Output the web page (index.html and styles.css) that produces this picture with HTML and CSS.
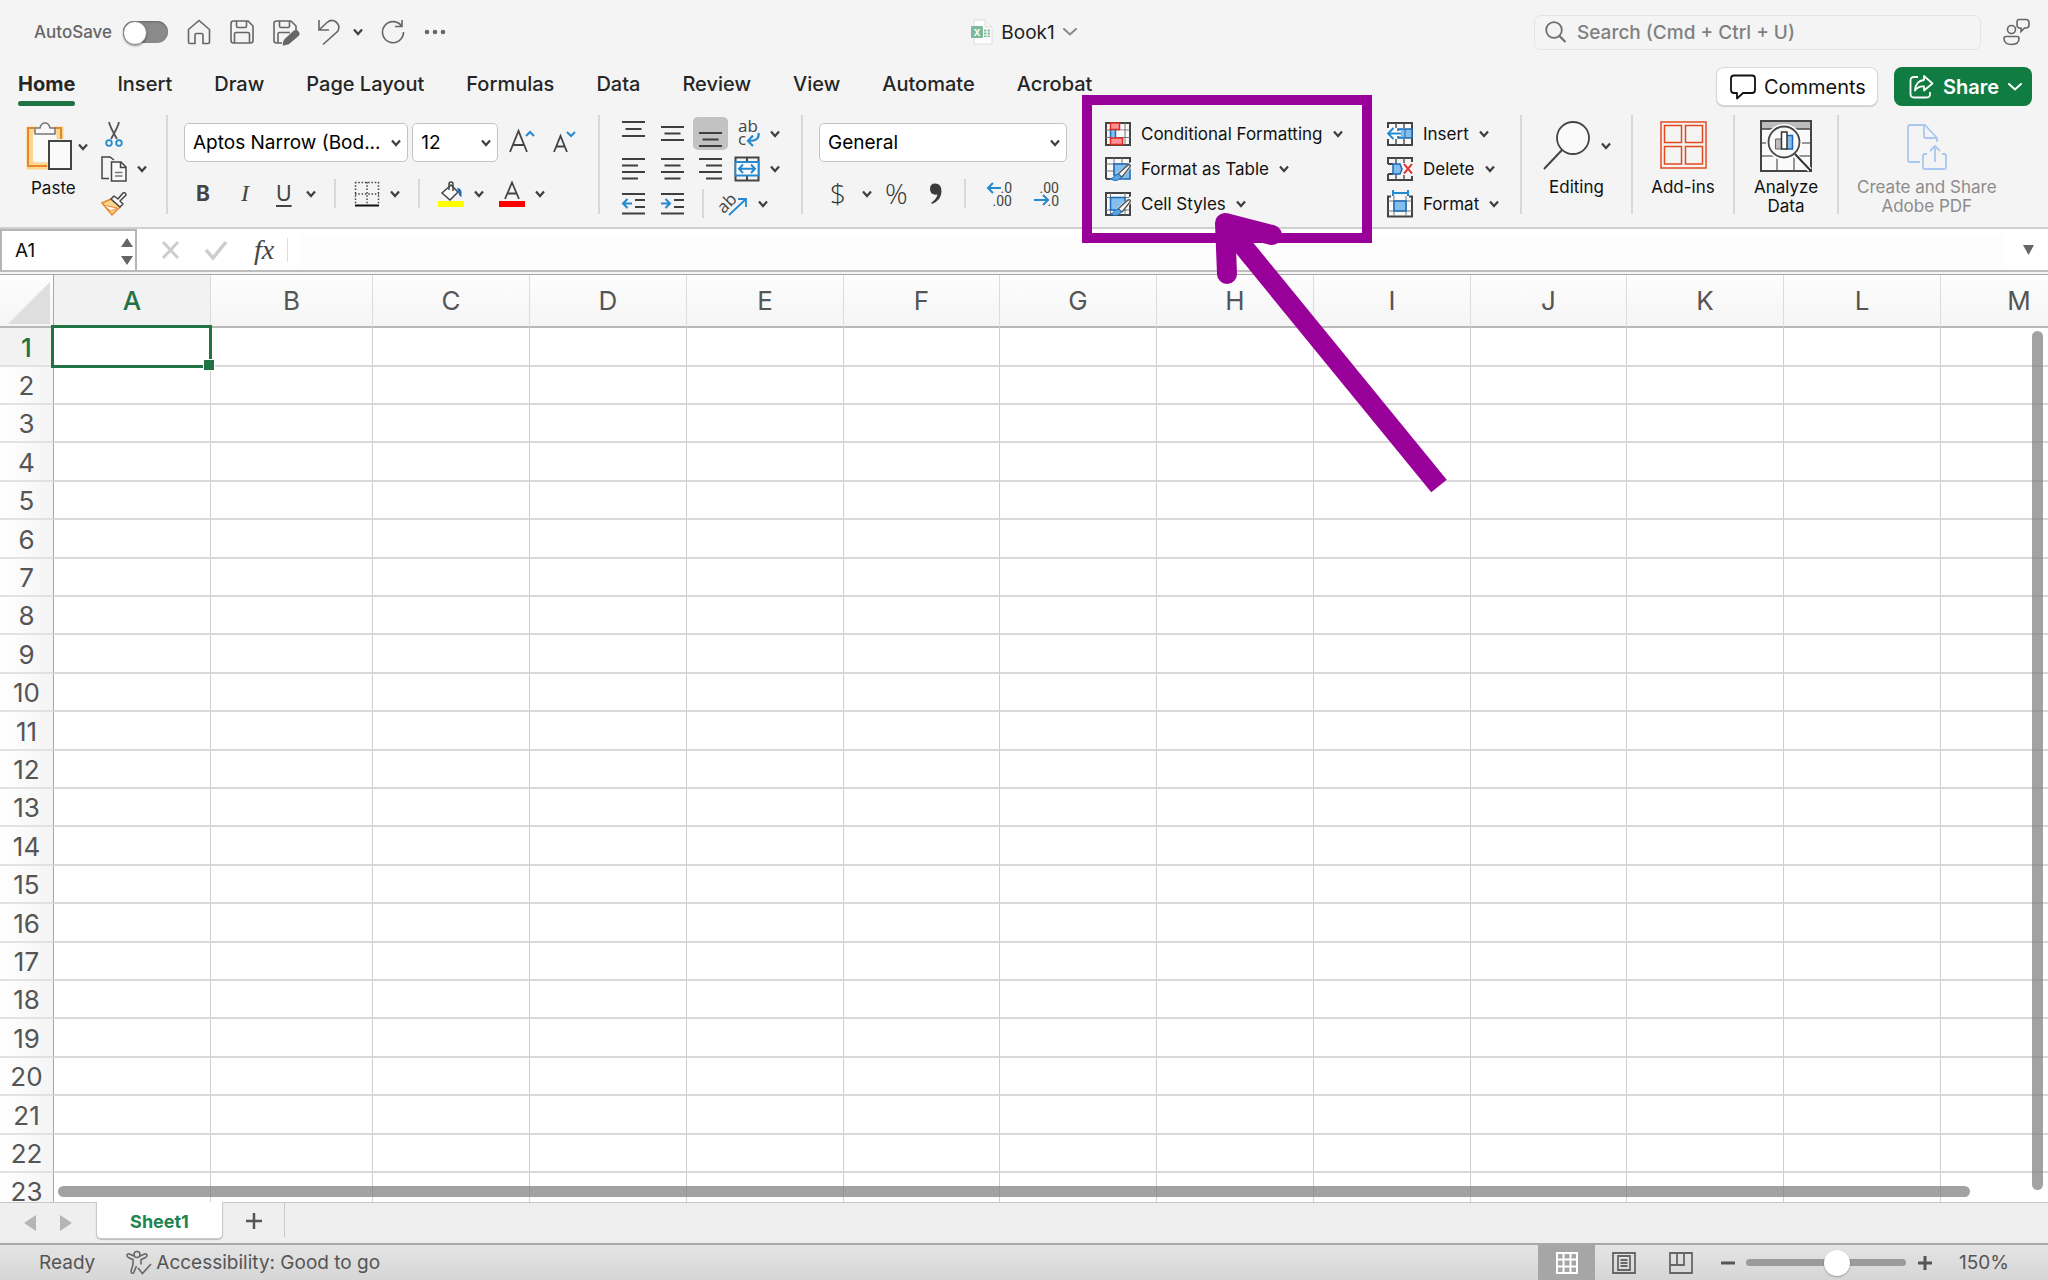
FILE: index.html
```
<!DOCTYPE html>
<html lang="en">
<head>
    <meta charset="UTF-8">
    <meta name="viewport" content="width=device-width, initial-scale=1.0">
    <title>Book1</title>
    <link rel="stylesheet" href="styles.css">
</head>
<body>
    <svg class="defs" aria-hidden="true">
        <symbol id="chev" viewBox="0 0 10 8"><path d="M1 1.5 5 6 9 1.5" fill="none" stroke="currentColor" stroke-width="2.2"/></symbol>
        <symbol id="chev-wide" viewBox="0 0 14 8"><path d="M1 1 7 6.5 13 1" fill="none" stroke="currentColor" stroke-width="2" stroke-linecap="round"/></symbol>
    </svg>

    <!-- Title bar -->
    <header class="title-bar">
        <div class="quick-access">
            <label class="autosave">AutoSave <input type="checkbox" class="toggle"></label>
            <button class="qa-btn" aria-label="Home"><svg width="24" height="26" viewBox="0 0 24 26"><path d="M1.5 10.5 12 1.5l10.500 9V23q0 1.500-1.500 1.500H16V16q0-1.500-1.500-1.500h-5Q8 14.500 8 16v8.500H3Q1.500 24.500 1.500 23z"/></svg></button>
            <button class="qa-btn" aria-label="Save"><svg width="24" height="24" viewBox="0 0 24 24"><path d="M3.500 1h14.500l5 5v14.500Q23 23 20.500 23h-17Q1 23 1 20.500v-17Q1 1 3.500 1zM6.500 1v5q0 1.500 1.500 1.500h7q1.500 0 1.500-1.500V1M4.500 23v-9q0-1.500 1.500-1.500h12q1.500 0 1.500 1.500v9"/></svg></button>
            <button class="qa-btn" aria-label="Save As"><svg width="26" height="26" viewBox="0 0 26 26"><path d="M9 24H3.500Q1 24 1 21.500v-17Q1 2 3.500 2h14.500l5 5v4M6.500 2v5q0 1.500 1.500 1.500h7q1.500 0 1.500-1.500V2M5 24v-9q0-1.500 1.500-1.500H17"/><path d="M21 12.500q2.500-1.500 4 .5t0 3.500l-9.500 8q-3 1-5 1.200 0-2.700 1.500-5z" class="fill-dark"/></svg></button>
            <button class="qa-btn undo" aria-label="Undo"><svg width="22" height="26" viewBox="0 0 22 26"><path d="M1 1v10h10M1.500 10.500 9 3.500q4.500-4 9-.5t2 9L5 25.500"/></svg><svg class="chev"><use href="#chev"/></svg></button>
            <button class="qa-btn" aria-label="Repeat"><svg width="24" height="26" viewBox="0 0 24 26"><path d="M20.500 7A10.500 10.500 0 1 0 22.500 13M21 1v6.500h-7"/></svg></button>
            <button class="qa-btn" aria-label="More"><svg width="22" height="6" viewBox="0 0 22 6" class="fill-dark"><circle cx="3" cy="3" r="1.500"/><circle cx="11" cy="3" r="1.500"/><circle cx="19" cy="3" r="1.500"/></svg></button>
        </div>
        <button class="doc-title">
            <svg width="22" height="26" viewBox="0 0 22 26"><path d="M3 1h11l7 7v17H3z" fill="#fff" stroke="#dcdcdc"/><path d="M14 1v7h7" fill="#f4f4f4" stroke="#dcdcdc"/><path d="M13 10.500h2.500v2H13zM16.500 10.500H19v2h-2.500zM13 13.500h2.500v2H13zM16.500 13.500H19v2h-2.500zM13 16.500h2.500v1.500H13zM16.500 16.500H19V18h-2.500z" fill="#7fbf9a"/><rect y="7" width="12" height="12" rx="1" fill="#7dba98"/><text x="6" y="16.500" text-anchor="middle" class="xl">X</text></svg>
            <span>Book1</span>
            <svg class="chev-wide"><use href="#chev-wide"/></svg>
        </button>
        <div class="title-right">
            <label class="search">
                <svg width="21" height="22" viewBox="0 0 21 22"><g fill="none" stroke="#6f6f6f" stroke-width="1.800"><circle cx="9" cy="9" r="7.800"/><path d="m14.500 15 6 6" stroke-width="2.200"/></g></svg>
                <input type="text" placeholder="Search (Cmd + Ctrl + U)" aria-label="Search">
            </label>
            <button class="qa-btn" aria-label="Account"><svg width="27" height="28" viewBox="0 0 27 28"><circle cx="8.500" cy="11.500" r="4"/><path d="M3 18.500h11q2 0 2 2 0 6-7.500 6T1 20.500q0-2 2-2zM16 1.500h7q3 0 3 3V7q0 3-3 3h-1.500L18 13.500V10h-2q-2-.5-2-3V4.500q0-3 2-3z"/></svg></button>
        </div>
    </header>

    <!-- Ribbon tabs -->
    <div class="tab-bar">
        <nav class="tabs">
            <button class="tab active">Home</button>
            <button class="tab">Insert</button>
            <button class="tab">Draw</button>
            <button class="tab">Page Layout</button>
            <button class="tab">Formulas</button>
            <button class="tab">Data</button>
            <button class="tab">Review</button>
            <button class="tab">View</button>
            <button class="tab">Automate</button>
            <button class="tab">Acrobat</button>
        </nav>
        <div class="tab-actions">
            <button class="comments"><svg width="26" height="26" viewBox="0 0 26 26"><path d="M4 1.500h18q3 0 3 3V16q0 3-3 3H13l-6 5.500V19H4q-3 0-3-3V4.500q0-3 3-3z" fill="none" stroke="#111" stroke-width="1.800" stroke-linejoin="round"/></svg>Comments</button>
            <button class="share"><svg width="25" height="24" viewBox="0 0 25 24"><path d="M9 2H5Q1.500 2 1.500 5.500v13.500q0 3.500 3.500 3.500h12.500q3.500 0 3.500-3.500V17M15 1l8.500 7.500L15 15.500v-4q-5.500-.5-9 4 .5-9.500 9-10.500z" fill="none" stroke="#fff" stroke-width="1.800" stroke-linejoin="round"/></svg>Share<svg class="chev-wide"><use href="#chev-wide"/></svg></button>
        </div>
    </div>

    <!-- Ribbon -->
    <div class="ribbon">
        <div class="group clipboard">
            <button class="big paste">
                <span class="big-icon">
                    <svg width="46" height="50" viewBox="0 0 46 50"><path d="M10 8H3v36h18M27 8h6v9" fill="none" stroke="#fbd68c" stroke-width="7"/><path d="M7 6H1v38h19M28 6h6v11" fill="none" stroke="#e8862e" stroke-width="2"/><path d="M6 11h23v8h-8v20H6z" fill="#fafafa"/><path d="M8 12V6h5q1-5 5-5t5 5h5v6z" fill="#f8f8f8" stroke="#777" stroke-width="1.500"/><rect x="22" y="19" width="22" height="28" fill="#fafafa" stroke="#444" stroke-width="2"/></svg>
                    <svg class="chev"><use href="#chev"/></svg>
                </span>
                Paste
            </button>
            <div class="col">
                <button class="tool" aria-label="Cut"><svg width="26" height="26" viewBox="0 0 26 26"><path d="M8 1q1 5 8 17M18 1q-1 5-8 17" fill="none" stroke="#555" stroke-width="1.800"/><circle cx="8" cy="22" r="2.800" fill="none" stroke="#2489ce" stroke-width="1.800"/><circle cx="18" cy="22" r="2.800" fill="none" stroke="#2489ce" stroke-width="1.800"/></svg></button>
                <button class="tool" aria-label="Copy"><svg width="26" height="26" viewBox="0 0 26 26" fill="none" stroke="#444" stroke-width="1.500"><path d="M8 22.500H1V1h8l4 3"/><path d="M10.500 6H20l5 5v14H10.500zM19.500 6v5.500H25" fill="#fafafa"/><path d="M14 16.500h7.500M14 20h7.500" stroke="#777"/></svg><svg class="chev"><use href="#chev"/></svg></button>
                <button class="tool" aria-label="Format Painter"><svg width="26" height="26" viewBox="0 0 26 26"><path d="m1 12 9-4 9 8q-3 3-8 8z" fill="#fbd68c" stroke="#e8862e" stroke-width="1.500"/><path d="m2 14 14 3-6 3z" fill="#fff" stroke="#e8862e"/><path d="m10 8 3-3 4 3 5-6q3-1 3 2l-6 6 3 3-3 3z" fill="#fafafa" stroke="#444" stroke-width="1.500" stroke-linejoin="round"/></svg></button>
            </div>
        </div>
        <div class="divider"></div>

        <div class="group font">
            <div class="row">
                <div class="combo font-name"><select aria-label="Font"><option>Aptos Narrow (Bod...</option></select><svg class="chev"><use href="#chev"/></svg></div>
                <div class="combo font-size"><select aria-label="Font size"><option>12</option></select><svg class="chev"><use href="#chev"/></svg></div>
                <button class="tool grow" aria-label="Increase font size"><svg width="26" height="26" viewBox="0 0 26 26" fill="none" stroke="#444" stroke-width="1.800"><path d="M1 22 9.500 1 18 22M4 15h11"/><path d="m17 6 4-4 4 4" stroke="#2489ce" stroke-width="2"/></svg></button>
                <button class="tool shrink" aria-label="Decrease font size"><svg width="26" height="26" viewBox="0 0 26 26" fill="none" stroke="#444" stroke-width="1.800"><path d="m3 22 6.500-16 6.500 16M5.500 16.500h8"/><path d="m16 2 4 4 4-4" stroke="#2489ce" stroke-width="2"/></svg></button>
            </div>
            <div class="row format-row">
                <button class="letter bold">B</button>
                <button class="letter italic">I</button>
                <button class="letter underline"><u>U</u><svg class="chev"><use href="#chev"/></svg></button>
                <div class="mini-divider"></div>
                <button class="tool" aria-label="Borders"><svg width="26" height="26" viewBox="0 0 26 26" fill="none" stroke="#444" stroke-width="1.500"><path d="M1 1.500h24M1 13h24M1.500 1v22M13 1v22M24.500 1v22" stroke-dasharray="1.500 1.800"/><path d="M1 24.500h24" stroke="#111" stroke-width="2"/></svg><svg class="chev"><use href="#chev"/></svg></button>
                <div class="mini-divider"></div>
                <button class="tool" aria-label="Fill color"><svg width="26" height="26" viewBox="0 0 26 26"><path d="m4 12 9-8 7 7-8 8z" fill="#fafafa" stroke="#444" stroke-width="1.500"/><path d="M11 9V3q0-2 2-2t2 2v7" fill="none" stroke="#444" stroke-width="1.500"/><path d="M19 7q4 0 4.500 4v5q-3-1-3-5z" fill="#1c69b5"/><path fill="#ff0" d="M0 20h26v6H0z"/></svg><svg class="chev"><use href="#chev"/></svg></button>
                <button class="tool" aria-label="Font color"><svg width="26" height="26" viewBox="0 0 26 26"><path d="m6 18 7-16.500L20 18M8.500 12.500h9" fill="none" stroke="#444" stroke-width="1.800"/><path fill="red" d="M0 20h26v6H0z"/></svg><svg class="chev"><use href="#chev"/></svg></button>
            </div>
        </div>
        <div class="divider"></div>

        <div class="group align">
            <div class="row">
                <button class="cell-btn" aria-label="Top align"><svg class="lines"><path d="M0 2h23M3.500 9h16M0 16h23"/></svg></button>
                <button class="cell-btn" aria-label="Middle align"><svg class="lines"><path d="M0 7h23M3.500 13.500h16M0 20h23"/></svg></button>
                <button class="cell-btn pressed" aria-label="Bottom align"><svg class="lines"><path d="M0 13h23M3.500 19.500h16M0 26h23"/></svg></button>
                <button class="tool" aria-label="Wrap text"><svg width="26" height="28" viewBox="0 0 26 28"><text x="4" y="12" class="icon-text">ab</text><text x="4" y="25" class="icon-text">c</text><path d="M24.500 13q1.500 8-10 8M19 15.500l-5 5.500 5 5" fill="none" stroke="#2489ce" stroke-width="2.200"/></svg><svg class="chev"><use href="#chev"/></svg></button>
            </div>
            <div class="row">
                <button class="cell-btn" aria-label="Align left"><svg class="lines"><path d="M0 4h23M0 10.500h16M0 17h23M0 23.500h16"/></svg></button>
                <button class="cell-btn" aria-label="Center"><svg class="lines"><path d="M0 4h23M3.500 10.500h16M0 17h23M3.500 23.500h16"/></svg></button>
                <button class="cell-btn" aria-label="Align right"><svg class="lines"><path d="M0 4h23M7 10.500h16M0 17h23M7 23.500h16"/></svg></button>
                <button class="tool" aria-label="Merge cells"><svg width="26" height="26" viewBox="0 0 26 26" fill="none"><path d="M1.500 1.500h23v23h-23zM13 1v24" stroke="#444" stroke-width="2"/><path d="M1.500 6h23v13.500h-23z" fill="#fafafa" stroke="#2489ce" stroke-width="1.800"/><path d="M5 12.700h16M9 8.500l-4 4.200L9 17M17 8.500l4 4.200-4 4.300" stroke="#2489ce" stroke-width="2"/></svg><svg class="chev"><use href="#chev"/></svg></button>
            </div>
            <div class="row">
                <button class="cell-btn" aria-label="Decrease indent"><svg class="lines"><path d="M0 4h23M13 10h10M13 17h10M0 23.500h23"/><path class="blue" d="M1 13.500h9M5.500 9 1 13.500 5.500 18"/></svg></button>
                <button class="cell-btn" aria-label="Increase indent"><svg class="lines"><path d="M0 4h23M13 10h10M13 17h10M0 23.500h23"/><path class="blue" d="M0 13.500h9M4.500 9 9 13.500 4.500 18"/></svg></button>
                <div class="mini-divider indent-divider"></div>
                <button class="tool" aria-label="Orientation"><svg width="28" height="28" viewBox="0 0 28 28"><text x="2" y="20" transform="rotate(-45 8 20)" class="icon-text">ab</text><path d="M9 25 26 9M18 9h8v8" fill="none" stroke="#2489ce" stroke-width="1.800"/></svg><svg class="chev"><use href="#chev"/></svg></button>
            </div>
        </div>
        <div class="divider"></div>

        <div class="group number">
            <div class="row">
                <div class="combo"><select aria-label="Number format"><option>General</option></select><svg class="chev"><use href="#chev"/></svg></div>
            </div>
            <div class="row format-row number-row">
                <button class="symbol">$<svg class="chev"><use href="#chev"/></svg></button>
                <button class="symbol percent">%</button>
                <button class="tool" aria-label="Comma style"><svg width="14" height="24" viewBox="0 0 14 24"><path d="M6 1.500q6.500 0 6.500 8Q12.500 18 3 22q-1-.7-.5-1.500 5-3.500 6-8-7.500 1-7.500-5.500Q1 1.500 6 1.500z" fill="#3b3b3b"/></svg></button>
                <div class="mini-divider"></div>
                <button class="tool" aria-label="Increase decimal"><svg width="26" height="28" viewBox="0 0 26 28"><text x="25" y="13" text-anchor="end" class="icon-num">.0</text><text x="25" y="26" text-anchor="end" class="icon-num">.00</text><path d="M1 8h13M6 3 1 8l5 5" class="stroke-blue"/></svg></button>
                <button class="tool" aria-label="Decrease decimal"><svg width="26" height="28" viewBox="0 0 26 28"><text x="25" y="13" text-anchor="end" class="icon-num">.00</text><text x="25" y="26" text-anchor="end" class="icon-num">.0</text><path d="M0 20h14M9 15l5 5-5 5" class="stroke-blue"/></svg></button>
            </div>
        </div>

        <div class="group styles">
            <button class="tool text-tool"><svg width="26" height="24" viewBox="0 0 26 24"><path d="M1 1h24v22H1z" fill="#fafafa" stroke="#444" stroke-width="2"/><path d="M1 8h24M1 15.500h24M14 1v22M20 1v22" stroke="#777" fill="none"/><path d="M11 8.500h8v6.500h-8z" fill="#fafafa"/><path d="M6 7h5v9H6z" fill="#83beec"/><path d="M5.500 7v9M10.500 7v9" stroke="#1c69b5" stroke-width="1.500"/><path d="M5.500 1h9v6.500h-9zM5.500 16h12v6.500h-12z" fill="#ff9199" stroke="#dc2c1e" stroke-width="1.500"/></svg><span>Conditional Formatting</span><svg class="chev"><use href="#chev"/></svg></button>
            <button class="tool text-tool"><svg width="26" height="24" viewBox="0 0 26 24"><path d="M1 22V1h24v6" fill="#fafafa" stroke="#444" stroke-width="2"/><path d="M1 7h24M1 14h8M9 1v6M17 1v6M9 7v11" stroke="#777" fill="none"/><path d="M9 7h16v15H15l-6-4z" fill="#83beec" stroke="#1c69b5" stroke-width="1.500"/><path d="M1 22h4" stroke="#444" stroke-width="2"/><path d="M26 5v6l-9 10-6-4z" fill="#fff"/><path d="m13 17 10-9q3-1 2 2l-8 10z" fill="#fafafa" stroke="#555" stroke-width="1.500"/><path d="M5 22q4-.5 5-4 4-2 6 1 0 4-6 4.500z" fill="#5aa5e2" stroke="#1c69b5"/></svg><span>Format as Table</span><svg class="chev"><use href="#chev"/></svg></button>
            <button class="tool text-tool"><svg width="26" height="24" viewBox="0 0 26 24"><path d="M1 1h24v22H1z" fill="#fafafa" stroke="#444" stroke-width="2"/><path d="M1 5.500h24M5.500 1v22M20 1v22M1 18h24" stroke="#777" fill="none"/><path d="M5.500 5.500H20V18H5.500z" fill="#83beec" stroke="#1c69b5" stroke-width="1.500"/><path d="M26 4v7l-9 10-7-3z" fill="#fff"/><path d="m13 17 10-9q3-1 2 2l-8 10z" fill="#fafafa" stroke="#555" stroke-width="1.500"/><path d="M5 22q4-.5 5-4 4-2 6 1 0 4-6 4.500z" fill="#5aa5e2" stroke="#1c69b5"/></svg><span>Cell Styles</span><svg class="chev"><use href="#chev"/></svg></button>
            <!-- highlight box and arrow pointing at Cell Styles -->
            <div class="callout"></div>
            <svg class="callout-arrow" width="240" height="290" viewBox="0 0 240 290" aria-hidden="true"><g fill="none" stroke="#909" stroke-width="20" stroke-linejoin="round"><path d="M232 281 18 19"/><path d="M20 69 18 18l47 12" stroke-linecap="round"/></g></svg>
        </div>

        <div class="group cells">
            <button class="tool text-tool"><svg width="26" height="24" viewBox="0 0 26 24"><path d="M1 6V1h24v22H1v-6" fill="#fafafa" stroke="#444" stroke-width="2"/><path d="M9 1v5M17 1v5M9 17v6M17 17v6" stroke="#555" stroke-width="1.500"/><path d="M11 7h14v9H11z" fill="#83beec" stroke="#1c69b5" stroke-width="1.500"/><path d="M18 7v9" stroke="#1c69b5"/><path d="M1 11.500h13M7 6l-5.500 5.500L7 17" fill="none" stroke="#fff" stroke-width="5"/><path d="M1 11.500h13M6.500 6 1 11.500 6.500 17" class="stroke-blue"/></svg><span>Insert</span><svg class="chev"><use href="#chev"/></svg></button>
            <button class="tool text-tool"><svg width="26" height="24" viewBox="0 0 26 24"><path d="M1 7V1h24v4M1 17v6h24v-4M1 7h5M1 17h5" fill="none" stroke="#444" stroke-width="2"/><path d="M9 1v6M17 1v5M9 17v6M17 18v5" stroke="#555" stroke-width="1.500"/><path d="M6 7h7l2 5-2 5H6z" fill="#83beec" stroke="#1c69b5" stroke-width="1.500"/><path d="m17 7 8 9.500M25 7l-8 9.500" stroke="#fff" stroke-width="5"/><path d="m17 7 8 9.500M25 7l-8 9.500" stroke="#e03a34" stroke-width="2"/></svg><span>Delete</span><svg class="chev"><use href="#chev"/></svg></button>
            <button class="tool text-tool"><svg width="26" height="28" viewBox="0 0 26 28"><path d="M4 6.500H1v20h24v-20h-3" fill="#fafafa" stroke="#444" stroke-width="2"/><path d="M1 11h24M1 21h24M7 6v20M19 6v20" stroke="#777" fill="none"/><path d="M7 11h12v10H7z" fill="#83beec" stroke="#1c69b5" stroke-width="1.500"/><path d="M6 3h15M6 0v6M21 0v6" class="stroke-blue"/></svg><span>Format</span><svg class="chev"><use href="#chev"/></svg></button>
        </div>
        <div class="divider"></div>

        <button class="big editing">
            <span class="big-icon"><svg width="48" height="50" viewBox="0 0 48 50"><circle cx="30" cy="17" r="16" fill="#fafafa" stroke="#444" stroke-width="1.800"/><path d="M19 29 1 48" stroke="#444" stroke-width="2"/></svg><svg class="chev"><use href="#chev"/></svg></span>
            Editing
        </button>
        <div class="divider"></div>
        <button class="big addins">
            <span class="big-icon"><svg width="47" height="50" viewBox="0 0 47 50" fill="none" stroke="#e2491d" stroke-width="1.500"><path d="M1 1h45v46H1zM4.500 4.500h17v17h-17zM25.500 4.500h17v17h-17zM4.500 25.500h17v17.500h-17zM25.500 25.500h17v17.500h-17z"/></svg></span>
            Add-ins
        </button>
        <div class="divider"></div>
        <button class="big analyze">
            <span class="big-icon"><svg width="52" height="52" viewBox="0 0 52 52"><path d="M1 1h50v50H1z" fill="#fafafa"/><path d="M1 1h50v8H1z" fill="#bdbdbd"/><path d="M1 23h50M1 36h50M17 36v15M34 36v15" stroke="#777" stroke-width="1.500"/><path d="M1 9h50" stroke="#444" stroke-width="1.500"/><path d="M1 1h50v50H1z" fill="none" stroke="#444" stroke-width="2"/><path d="m35 35 15 15" stroke="#fff" stroke-width="5"/><circle cx="24" cy="22" r="18" fill="#fff"/><circle cx="24" cy="22" r="15.500" fill="#fafafa" stroke="#444" stroke-width="1.800"/><path d="m35 34 16 17" stroke="#333" stroke-width="2"/><path d="M15.500 19h6v10h-6z" fill="#bdbdbd" stroke="#666"/><path d="M26 15.500h6.500V29H26z" fill="#83beec" stroke="#1c69b5" stroke-width="1.500"/><path d="M21.500 12h5.500v17h-5.500z" fill="#fff" stroke="#333" stroke-width="1.500"/></svg></span>
            Analyze<br>Data
        </button>
        <div class="divider"></div>
        <button class="big pdf" disabled>
            <span class="big-icon"><svg width="40" height="50" viewBox="0 0 40 50" fill="none" stroke="#a9c8f0" stroke-width="1.800" stroke-linejoin="round"><path d="M13 41H3q-2 0-2-2V6q0-2 2-2h15l12 13v4M17 4v11q0 2 2 2h11M20 33h-2q-2 0-2 2v11q0 2 2 2h19q2 0 2-2V35q0-2-2-2h-2M28 41V25M23 30l5-5 5 5"/></svg></span>
            Create and Share<br>Adobe PDF
        </button>
    </div>

    <!-- Formula bar -->
    <div class="formula-bar">
        <div class="name-box">
            <input type="text" value="A1" aria-label="Name box">
            <svg width="12" height="28" viewBox="0 0 12 28"><path d="m6 1 6 9H0zM6 28l6-9H0z" fill="#666"/></svg>
        </div>
        <button class="fb-btn" aria-label="Cancel"><svg width="20" height="20" viewBox="0 0 20 20"><path d="m2 2 15 16M17 2 2 18" stroke="#cdcdcd" stroke-width="3"/></svg></button>
        <button class="fb-btn" aria-label="Enter"><svg width="22" height="20" viewBox="0 0 22 20"><path d="m1 10 7 8L21 2" fill="none" stroke="#cdcdcd" stroke-width="3.500"/></svg></button>
        <button class="fb-btn fx">fx</button>
        <input type="text" class="formula" aria-label="Formula">
        <button class="fb-btn" aria-label="Expand formula bar"><svg width="11" height="10" viewBox="0 0 11 10"><path d="M0 0h11L5.500 10z" fill="#666"/></svg></button>
    </div>

    <!-- Sheet -->
    <main class="sheet">
        <table class="grid">
            <thead><tr id="colHeads"><th class="corner"><svg width="42" height="42" viewBox="0 0 42 42"><path d="M42 0v42H0z" fill="#dedede"/></svg></th></tr></thead>
            <tbody id="rows"></tbody>
        </table>
        <div class="scroll-v"></div>
        <div class="scroll-h"></div>
    </main>

    <!-- Sheet tabs -->
    <div class="sheet-tabs">
        <button class="nav-arrow" aria-label="Previous sheet"><svg width="12" height="16" viewBox="0 0 12 16"><path d="M12 0v16L0 8z"/></svg></button>
        <button class="nav-arrow" aria-label="Next sheet"><svg width="12" height="16" viewBox="0 0 12 16"><path d="M0 0v16l12-8z"/></svg></button>
        <button class="sheet-tab">Sheet1</button>
        <button class="add-sheet" aria-label="Add sheet"><svg width="16" height="16" viewBox="0 0 16 16"><path d="M8 0v16M0 8h16" stroke="#555" stroke-width="2.500"/></svg></button>
    </div>

    <!-- Status bar -->
    <footer class="status-bar">
        <span>Ready</span>
        <button class="a11y"><svg width="26" height="26" viewBox="0 0 26 26" fill="none" stroke="#666" stroke-width="1.600"><circle cx="11" cy="4.500" r="3"/><path d="M8 6 3.500 4Q1 3.500 1 5.500t6 4v5L5 21q0 3 2.500 2l3-7M14 6l4.500-2q2.500-.5 2.500 1.500t-6 4v5M12 18l4.500 5.500L25 14"/></svg>Accessibility: Good to go</button>
        <div class="view-controls">
            <button class="view active" aria-label="Normal view"><svg width="22" height="22" viewBox="0 0 22 22" fill="none" stroke="#fff" stroke-width="2"><path d="M1 1h20v20H1zM1 7.500h20M1 14.500h20M7.500 1v20M14.500 1v20"/></svg></button>
            <button class="view" aria-label="Page layout view"><svg width="24" height="22" viewBox="0 0 24 22" fill="none" stroke="#666" stroke-width="1.800"><path d="M1 1h22v20H1zM6 4h12v14H6zM8.500 8h7M8.500 11h7M8.500 14h7"/></svg></button>
            <button class="view" aria-label="Page break view"><svg width="24" height="22" viewBox="0 0 24 22" fill="none" stroke="#666" stroke-width="1.800"><path d="M1 1h22v20H1zM1 13h14V1M8 1v12"/></svg></button>
            <button class="zoom-btn" aria-label="Zoom out"><svg width="14" height="14" viewBox="0 0 14 14"><path d="M0 7h14" stroke="#555" stroke-width="3"/></svg></button>
            <input type="range" class="zoom-slider" min="0" max="100" value="58" aria-label="Zoom">
            <button class="zoom-btn" aria-label="Zoom in"><svg width="14" height="14" viewBox="0 0 14 14"><path d="M0 7h14M7 0v14" stroke="#555" stroke-width="3"/></svg></button>
            <span class="zoom-value">150%</span>
        </div>
    </footer>

    <script>
        // Fill the window with column headers and rows
        const colCount = Math.min(26, Math.ceil(window.innerWidth / 157));
        const rowCount = Math.ceil((window.innerHeight - 406) / 38);
        const heads = document.getElementById('colHeads');
        const rows = document.getElementById('rows');

        for (let c = 0; c < colCount; c++) {
            const th = document.createElement('th');
            th.textContent = String.fromCharCode(65 + c);
            if (c === 0) th.className = 'selected';
            heads.appendChild(th);
        }

        for (let r = 1; r <= rowCount; r++) {
            const tr = document.createElement('tr');
            const th = document.createElement('th');
            th.textContent = r;
            if (r === 1) th.className = 'selected';
            tr.appendChild(th);
            for (let c = 0; c < colCount; c++) {
                const td = document.createElement('td');
                if (r === 1 && c === 0) td.className = 'current';
                tr.appendChild(td);
            }
            rows.appendChild(tr);
        }
    </script>
</body>
</html>
```
FILE: styles.css
```
* {
    box-sizing: border-box;
}

body {
    margin: 0;
    height: 100vh;
    display: flex;
    flex-direction: column;
    overflow: hidden;
    font-family: Inter, "Liberation Sans", sans-serif;
    font-size: 17px;
    color: #111;
    background: #f4f4f4;
}

button,
input,
select {
    font: inherit;
    color: inherit;
    background: none;
    border: none;
    padding: 0;
    margin: 0;
    outline: none;
}

svg {
    display: block;
    flex: none;
    overflow: visible;
}

.defs {
    display: none;
}

.chev {
    width: 10px;
    height: 8px;
    color: #3f3f3f;
}

.chev-wide {
    width: 14px;
    height: 8px;
}

/* Title bar */
.title-bar {
    display: grid;
    grid-template-columns: 1fr auto 1fr;
    align-items: center;
    height: 64px;
    padding: 0 18px;
}

.quick-access,
.title-right,
.autosave,
.doc-title {
    display: flex;
    align-items: center;
}

.quick-access {
    gap: 19px;
    padding-left: 16px;
}

.autosave {
    gap: 11px;
    color: #666;
    font-weight: 500;
}

.toggle {
    appearance: none;
    width: 45px;
    height: 22px;
    border-radius: 11px;
    background: #8a8a8a;
    box-shadow: inset 0 1px 2px #666;
}

.toggle::before {
    content: '';
    display: block;
    width: 22px;
    height: 22px;
    border-radius: 50%;
    background: #fff;
    border: 1px solid #888;
    box-shadow: 0 1px 2px rgba(0, 0, 0, 0.4);
}

.qa-btn {
    display: flex;
    align-items: center;
}

.qa-btn svg {
    fill: none;
    stroke: #666;
    stroke-width: 1.6;
}

.qa-btn .fill-dark {
    fill: #666;
}

.undo {
    gap: 13px;
    margin-right: -1px;
}

.doc-title {
    gap: 8px;
    font-size: 19px;
    color: #222;
}

.doc-title .chev-wide {
    color: #888;
}

.xl {
    font: bold 9px Inter, sans-serif;
    fill: #fff;
}

.title-right {
    justify-content: flex-end;
    gap: 22px;
}

.search {
    display: flex;
    align-items: center;
    gap: 11px;
    flex: 0 1 447px;
    height: 35px;
    padding: 0 10px;
    border: 1px solid #e4e4e4;
    border-radius: 7px;
}

.search input {
    flex: 1;
    font-size: 19px;
    font-weight: 500;
}

.search input::placeholder {
    color: #808080;
}

/* Ribbon tabs */
.tab-bar {
    display: flex;
    justify-content: space-between;
    align-items: flex-start;
    height: 51px;
    padding: 0 16px 0 18px;
}

.tabs {
    display: flex;
    align-items: flex-start;
    gap: 42px;
}

.tab {
    padding-top: 8px;
    font-size: 20px;
    line-height: 24px;
    font-weight: 500;
    color: #262626;
    white-space: nowrap;
}

.tab.active {
    font-weight: 700;
}

.tab.active::after {
    content: '';
    display: block;
    height: 5px;
    margin-top: 5px;
    border-radius: 3px;
    background: #217346;
}

.tab-actions {
    display: flex;
    gap: 16px;
    padding-top: 3px;
}

.comments,
.share {
    display: flex;
    align-items: center;
    height: 39px;
    padding: 0 11px 0 13px;
    border-radius: 8px;
    font-size: 20px;
}

.comments {
    gap: 8px;
    background: #fff;
    border: 1px solid #d9d9d9;
    box-shadow: 0 1px 1px #ccc;
}

.share {
    gap: 9px;
    padding: 0 10px 0 15px;
    background: #107c41;
    color: #fff;
    font-weight: 600;
}

/* Ribbon */
.ribbon {
    display: flex;
    align-items: flex-start;
    height: 114px;
    border-bottom: 2px solid #cfcfcf;
}

.divider {
    flex: none;
    width: 2px;
    height: 99px;
    background: #d8d8d8;
}

.mini-divider {
    flex: none;
    width: 2px;
    height: 29px;
    background: #d8d8d8;
}

.group {
    flex: none;
    height: 105px;
    margin: 0 21px 0 16px;
    padding-top: 1px;
}

.row,
.tool,
.text-tool {
    display: flex;
    align-items: center;
}

.tool {
    gap: 10px;
}

.clipboard {
    display: flex;
    gap: 13px;
    width: 118px;
    margin-left: 27px;
}

.col .tool {
    height: 35px;
}

.big {
    flex: none;
    display: flex;
    flex-direction: column;
    align-items: center;
    padding-top: 4px;
    font-size: 17px;
    line-height: 19px;
    text-align: center;
}

.big-icon {
    display: flex;
    align-items: center;
    gap: 8px;
    height: 54px;
    margin-bottom: 5px;
}

.paste .big-icon {
    gap: 5px;
}

.paste {
    align-items: flex-start;
    width: 61px;
    text-indent: 4px;
}

.combo {
    display: flex;
    align-items: center;
    height: 39px;
    padding: 0 6px 0 8px;
    background: #fff;
    border: 1px solid #c3c3c3;
    border-radius: 5px;
}

.combo select {
    flex: 1;
    min-width: 0;
    appearance: none;
    font-size: 19px;
    color: #000;
}

.font {
    width: 393px;
    padding-top: 8px;
}

.font-name {
    width: 225px;
    margin-right: 4px;
}

.font-size {
    width: 86px;
    margin-right: 11px;
}

.grow {
    margin-right: 16px;
}

.format-row {
    height: 29px;
    margin-top: 17px;
}

.font .format-row {
    gap: 18px;
    padding-left: 12px;
}

.font .format-row .tool + .tool {
    margin-left: -3px;
}

.letter {
    display: flex;
    align-items: center;
    gap: 14px;
    font-size: 21px;
    color: #444;
}

.bold {
    font-weight: 700;
    width: 18px;
}

.italic {
    justify-content: center;
    width: 26px;
    font-family: "Liberation Serif", serif;
    font-style: italic;
    font-size: 24px;
}

.underline u {
    text-underline-offset: 4px;
    text-decoration-thickness: 2px;
}

.align {
    width: 164px;
}

.align .row {
    height: 35px;
    gap: 4px;
}

.align .tool {
    margin-left: 2px;
}

.cell-btn {
    display: flex;
    align-items: center;
    justify-content: center;
    width: 35px;
    height: 33px;
    border-radius: 5px;
}

.cell-btn.pressed {
    background: #c2c2c2;
}

.lines {
    width: 23px;
    height: 28px;
    fill: none;
    stroke: #3f3f3f;
    stroke-width: 2;
}

.lines .blue,
.stroke-blue {
    fill: none;
    stroke: #2489ce;
    stroke-width: 2;
}

.align .indent-divider {
    margin: 0 10px 0 8px;
}

.icon-text {
    font: 17px "Open Sans", sans-serif;
    fill: #444;
}

.icon-num {
    font: 14px Roboto, sans-serif;
    fill: #444;
}

.number {
    width: 248px;
    margin-right: 0;
    padding-top: 8px;
}

.number .combo {
    width: 100%;
}

.number-row {
    justify-content: space-between;
    padding: 0 7px 0 11px;
}

.symbol {
    display: flex;
    align-items: center;
    gap: 16px;
    font: 28px "Open Sans", sans-serif;
    font-weight: 300;
    line-height: 29px;
    color: #333;
}

.percent {
    margin-left: -8px;
}

/* Styles and cells */
.styles {
    position: relative;
    width: 290px;
    margin-left: 15px;
    margin-right: 15px;
    padding-left: 23px;
}

.cells {
    width: 112px;
    margin-left: 0;
}

.text-tool {
    height: 35px;
    font-size: 17px;
    white-space: nowrap;
}

.callout {
    position: absolute;
    top: -20px;
    left: 0;
    width: 290px;
    height: 148px;
    border: 10px solid #909;
    pointer-events: none;
}

.callout-arrow {
    position: absolute;
    top: 90px;
    left: 125px;
    z-index: 10;
    pointer-events: none;
}

.editing {
    width: 109px;
}

.editing .big-icon {
    gap: 10px;
}

.addins {
    width: 100px;
}

.analyze {
    width: 102px;
}

.pdf {
    padding-left: 18px;
    color: #8c8c8c;
}

/* Formula bar */
.formula-bar {
    display: flex;
    align-items: center;
    height: 43px;
    background: #fff;
    border-bottom: 2px solid #bdbdbd;
}

.name-box {
    display: flex;
    align-items: center;
    align-self: stretch;
    width: 137px;
    padding: 0 2px 0 13px;
    border: 2px solid #b5b5b5;
    border-bottom: none;
}

.name-box input {
    flex: 1;
    min-width: 0;
    font-size: 19px;
}

.fb-btn {
    margin-left: 24px;
}

.fx {
    margin-left: 27px;
    padding-right: 13px;
    border-right: 1px solid #ddd;
    font: italic 28px "Liberation Serif", serif;
    line-height: 24px;
    color: #444;
}

.formula {
    flex: 1;
    height: 32px;
    margin-left: 12px;
    background: #fdfdfd;
}

.formula + .fb-btn {
    margin: 0 14px 0 20px;
}

/* Sheet */
.sheet {
    position: relative;
    flex: 1;
    min-height: 0;
    margin-top: 2px;
    border-top: 1px solid #a8a8a8;
    background: #fff;
    overflow: hidden;
}

.grid {
    width: max-content;
    table-layout: fixed;
    border-collapse: separate;
    border-spacing: 0;
}

.grid th {
    width: 157px;
    padding: 0;
    font-size: 26px;
    font-weight: 400;
    color: #555;
}

.grid thead th {
    height: 53px;
    border-right: 1px solid #dcdcdc;
    border-bottom: 2px solid #b8b8b8;
    background: linear-gradient(#fdfdfd, #f5f5f5);
}

.grid thead th:nth-child(3) {
    width: 162px;
}

/* at 150% zoom some columns round down and some rows round up */
.grid thead th:nth-child(4n + 7) {
    width: 156px;
}

.grid .corner,
.grid tbody th,
.grid thead .corner {
    width: 54px;
    border-right: 1px solid #a8a8a8;
}

.corner svg {
    margin: 4px 0 0 8px;
}

.grid tbody th {
    padding-top: 2px;
    line-height: 32px;
    border-bottom: 2px solid #e2e2e2;
    background: linear-gradient(90deg, #fff, #f4f4f4);
}

.grid tbody tr {
    height: 38px;
}

.grid tbody tr:nth-child(5n + 1),
.grid tbody tr:nth-child(5n + 4) {
    height: 39px;
}

.grid td {
    padding: 0;
    border-right: 1px solid #cfcfcf;
    border-bottom: 2px solid #d9d9d9;
}

.grid thead .selected,
.grid tbody .selected {
    background: #f2f2f2;
    color: #217346;
    font-weight: 500;
}

.current {
    position: relative;
}

.current::before {
    content: '';
    position: absolute;
    inset: -3px -2px -3px -3px;
    border: 3px solid #217346;
}

.current::after {
    content: '';
    position: absolute;
    right: -5px;
    bottom: -6px;
    width: 10px;
    height: 10px;
    border: 1px solid #fff;
    background: #217346;
}

.scroll-v,
.scroll-h {
    position: absolute;
    border-radius: 6px;
    background: rgba(128, 128, 128, 0.73);
}

.scroll-v {
    top: 56px;
    right: 5px;
    bottom: 12px;
    width: 11px;
}

.scroll-h {
    left: 58px;
    right: 78px;
    bottom: 5px;
    height: 11px;
}

/* Sheet tabs */
.sheet-tabs {
    display: flex;
    align-items: flex-start;
    height: 43px;
    padding-left: 24px;
    background: #efefef;
    border-top: 1px solid #c9c9c9;
    border-bottom: 2px solid #a8a8a8;
}

.nav-arrow {
    margin: 12px 24px 0 0;
    fill: #b5b5b5;
}

.sheet-tab {
    width: 127px;
    height: 37px;
    margin-top: -1px;
    padding-top: 2px;
    background: #fff;
    border: 1px solid #c9c9c9;
    border-top: none;
    border-radius: 0 0 5px 5px;
    box-shadow: 0 1px 1px #bbb;
    font-size: 18px;
    font-weight: 700;
    color: #1f8550;
}

.add-sheet {
    height: 34px;
    padding: 2px 22px 0 23px;
    border-right: 1px solid #c9c9c9;
}

/* Status bar */
.status-bar {
    display: flex;
    align-items: center;
    height: 35px;
    padding-left: 39px;
    background: linear-gradient(#e4e4e4, #d6d6d6);
    font-size: 19px;
    color: #555;
}

.a11y {
    display: flex;
    align-items: center;
    gap: 4px;
    margin-left: 31px;
}

.view-controls {
    display: flex;
    align-items: center;
    align-self: stretch;
    margin-left: auto;
    padding-right: 39px;
}

.view {
    display: flex;
    align-items: center;
    justify-content: center;
    width: 57px;
    height: 35px;
}

.view.active {
    background: #a6a6a6;
}

.zoom-btn {
    margin-left: 12px;
}

.zoom-slider {
    appearance: none;
    width: 160px;
    height: 7px;
    margin-left: 11px;
    border-radius: 4px;
    background: #9b9b9b;
}

.zoom-slider::-webkit-slider-thumb {
    appearance: none;
    width: 26px;
    height: 26px;
    border-radius: 50%;
    background: #fff;
    box-shadow: 0 1px 2px rgba(0, 0, 0, 0.3);
}

.zoom-value {
    width: 50px;
    margin-left: 27px;
}
```
